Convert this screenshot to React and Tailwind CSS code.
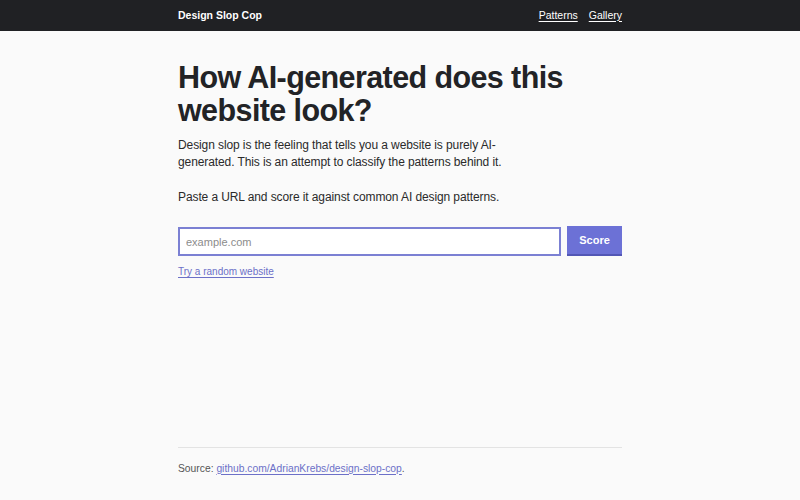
import React from "react";

export default function App() {
  return (
    <div className="flex min-h-screen flex-col bg-[#fafafa] font-['Liberation_Sans','Helvetica',sans-serif] text-[#222]">
      {/* Top bar */}
      <header className="bg-[#202124] text-white">
        <div className="mx-auto flex h-[31px] w-[444px] items-center justify-between">
          <span className="text-[10.5px] font-bold">Design Slop Cop</span>
          <nav className="flex gap-[11px] text-[10.5px]">
            <a href="#" className="underline underline-offset-2">Patterns</a>
            <a href="#" className="underline underline-offset-2">Gallery</a>
          </nav>
        </div>
      </header>

      <main className="mx-auto w-[444px] flex-1 pt-[30px]">
        <h1 className="w-[420px] text-[30.5px] leading-[33px] font-bold tracking-[-0.6px] text-[#222326]">
          How AI-generated does this website look?
        </h1>
        <p className="mt-[10px] w-[330px] text-[12px] leading-[17px] tracking-[-0.1px] text-[#2a2a2a]">
          Design slop is the feeling that tells you a website is purely AI-generated. This is an attempt to classify the patterns behind it.
        </p>
        <p className="mt-[18px] text-[12px] leading-[17px] tracking-[-0.1px] text-[#2a2a2a]">
          Paste a URL and score it against common AI design patterns.
        </p>

        <form className="mt-[20px] flex items-start gap-[6px]" onSubmit={(e) => e.preventDefault()}>
          <input
            type="text"
            placeholder="example.com"
            className="mt-[1px] h-[29px] flex-1 border-2 border-[#7b80d3] bg-white px-[6px] text-[11px] text-[#222] outline-none placeholder:text-[#8c8c8c]"
          />
          <button
            type="submit"
            className="h-[30px] w-[55px] border-b-2 border-[#5257b5] bg-[#6c71d6] text-[11px] font-bold text-white"
          >
            Score
          </button>
        </form>
        <a href="#" className="mt-[8px] inline-block text-[10px] text-[#6c70c8] underline underline-offset-2">
          Try a random website
        </a>
      </main>

      <footer className="mx-auto w-[444px] pb-[24px]">
        <div className="border-t border-[#e3e3e3] pt-[13px] text-[10.3px] text-[#555]">
          Source:{" "}
          <a href="#" className="text-[#6c70c8] underline underline-offset-2">
            github.com/AdrianKrebs/design-slop-cop
          </a>
          .
        </div>
      </footer>
    </div>
  );
}
